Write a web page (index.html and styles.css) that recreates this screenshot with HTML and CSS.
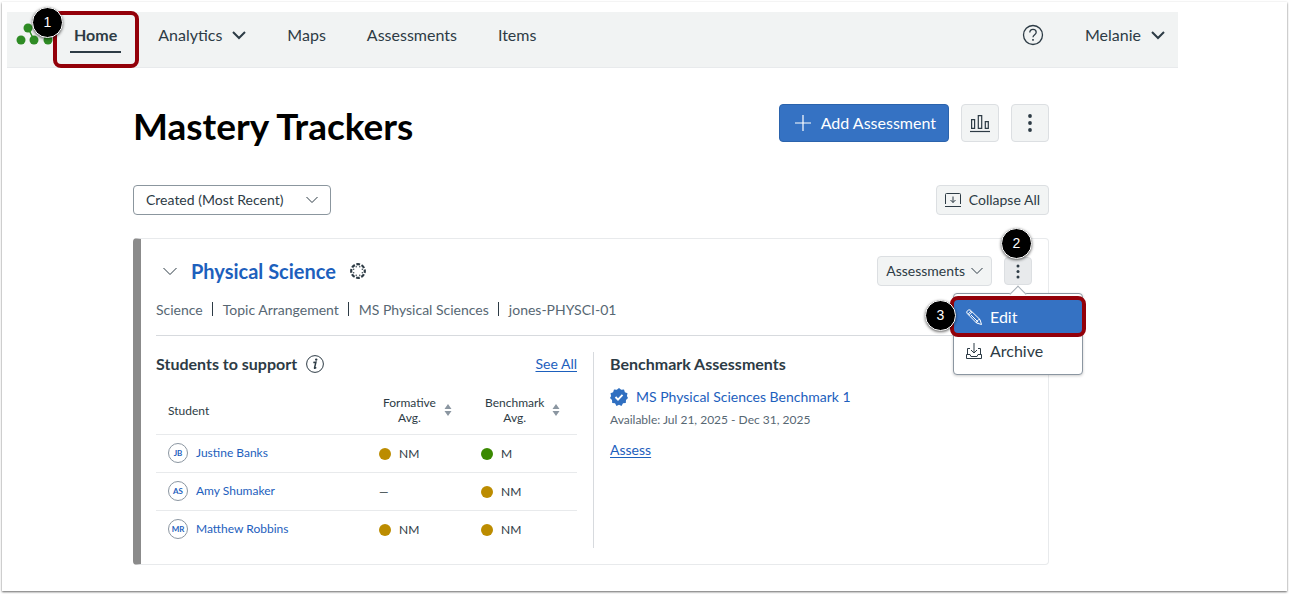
FILE: index.html
```html
<!DOCTYPE html>
<html lang="en">
<head>
<meta charset="utf-8">
<title>Mastery Trackers</title>
<meta name="viewport" content="width=device-width, initial-scale=1">
<link rel="stylesheet" href="styles.css">
</head>
<body>
<div class="frame">
  <div class="app">
    <header class="topbar">
      <a class="logo" href="#" aria-label="Dashboard">
        <svg width="42" height="24" viewBox="0 0 42 24" fill="#2e8b24"><path d="M12 5l6 12M25 5l7 12" stroke="#2e8b24" stroke-width="1.5"/><circle cx="12" cy="5" r="4.5"/><circle cx="25" cy="5" r="4.5"/><circle cx="5" cy="17" r="4.5"/><circle cx="18" cy="17" r="4.5"/><circle cx="32" cy="17" r="4.5"/></svg>
      </a>
      <nav class="nav">
        <a class="nav-link nav-current" href="#">Home<span class="mark mark-home"></span><span class="step step-home">1</span></a>
        <a class="nav-link" href="#">Analytics <svg width="14" height="9" viewBox="0 0 14 9" fill="none" stroke="#2d3b45" stroke-width="2"><path d="M1 1l6 6 6-6"/></svg></a>
        <a class="nav-link" href="#">Maps</a>
        <a class="nav-link" href="#">Assessments</a>
        <a class="nav-link" href="#">Items</a>
      </nav>
      <button class="help" type="button" aria-label="Help">
        <svg width="22" height="22" viewBox="0 0 22 22" fill="none" stroke="#2d3b45" stroke-width="1.3"><circle cx="11" cy="11" r="9.5"/><path d="M7.8 8.6c0-2 1.4-3.2 3.2-3.2s3.2 1.200 3.200 2.900c0 2.300-3.200 2.500-3.200 5"/><path d="M11 15v1.700" stroke-width="1.600"/></svg>
      </button>
      <a class="nav-link" href="#">Melanie <svg width="14" height="9" viewBox="0 0 14 9" fill="none" stroke="#2d3b45" stroke-width="2"><path d="M1 1l6 6 6-6"/></svg></a>
    </header>

    <main class="content">
      <div class="title-row">
        <h1 class="title">Mastery Trackers</h1>
        <div class="actions">
          <button class="btn btn-primary" type="button"><svg width="16" height="16" viewBox="0 0 16 16" stroke="#fff" stroke-width="1.200"><path d="M8 0v16M0 8h16"/></svg>Add Assessment</button>
          <button class="btn btn-icon" type="button" aria-label="Reports"><svg width="20" height="20" viewBox="0 0 20 20" fill="none" stroke="#2d3b45" stroke-width="1.200"><path d="M1.600 6.600h3v8.800h-3zM8.300 2.600h3.400v12.800H8.300zM15.300 8.600h3v6.800h-3z"/><path d="M0 18.500h20"/></svg></button>
          <button class="btn btn-icon" type="button" aria-label="More options"><svg width="4" height="18" viewBox="0 0 4 18" fill="#2d3b45"><circle cx="2" cy="2" r="1.900"/><circle cx="2" cy="9" r="1.900"/><circle cx="2" cy="16" r="1.900"/></svg></button>
        </div>
      </div>

      <div class="sort-row">
        <div class="sort">
          <select class="sort-select" aria-label="Sort trackers"><option>Created (Most Recent)</option></select>
          <svg class="sort-chevron" width="12" height="8" viewBox="0 0 12 8" fill="none" stroke="#2d3b45"><path d="M.5 1L6 6.500 11.500 1"/></svg>
        </div>
        <button class="btn btn-small" type="button"><svg width="16" height="16" viewBox="0 0 16 16" fill="none" stroke="#2d3b45"><path d="M.5 12V2.500q0-1 1-1h13q1 0 1 1V12M0 14.500h16M8 4.500v6M5.500 8L8 10.500 10.500 8"/></svg>Collapse All</button>
      </div>

      <section class="card">
        <div class="card-head">
          <button class="toggle" type="button" aria-label="Collapse tracker"><svg width="14" height="9" viewBox="0 0 14 9" fill="none" stroke="#2d3b45"><path d="M.5 1L7 7.500 13.500 1"/></svg></button>
          <h2 class="card-title"><a href="#">Physical Science</a></h2>
          <svg class="canvas-icon" width="16" height="16" viewBox="0 0 16 16"><circle cx="8" cy="8" r="6.800" fill="none" stroke="#2d3b45" stroke-width="2.200" stroke-dasharray="3.740 1.600" stroke-dashoffset="1.870"/><g fill="#2d3b45"><circle cx="9.800" cy="3.700" r=".7"/><circle cx="12.300" cy="6.200" r=".7"/><circle cx="12.300" cy="9.800" r=".7"/><circle cx="9.800" cy="12.300" r=".7"/><circle cx="6.200" cy="12.300" r=".7"/><circle cx="3.700" cy="9.800" r=".7"/><circle cx="3.700" cy="6.200" r=".7"/><circle cx="6.200" cy="3.700" r=".7"/></g></svg>
          <button class="btn btn-small card-assess" type="button">Assessments <svg width="12" height="8" viewBox="0 0 12 8" fill="none" stroke="#2d3b45"><path d="M.5 1L6 6.500 11.500 1"/></svg></button>
          <div class="more">
            <button class="btn more-btn" type="button" aria-label="Tracker options" aria-expanded="true"><svg width="4" height="15" viewBox="0 0 4 15" fill="#2d3b45"><circle cx="2" cy="2" r="1.500"/><circle cx="2" cy="7.500" r="1.500"/><circle cx="2" cy="13" r="1.500"/></svg></button>
            <span class="step step-more">2</span>
            <div class="menu">
              <button class="menu-item menu-active" type="button"><svg width="16" height="16" viewBox="0 0 16 16" fill="none" stroke="#fff"><path d="M1 4.200Q.2 3 1.500 1.700T4.200 1L14 10.500l1.500 5-5-1.500zM3 6.200L6.200 3M2 5.200L5.200 2M5 6l7.200 7.200M10.500 14c0-2 1.500-3.500 3.500-3.500"/></svg>Edit<span class="mark mark-edit"></span><span class="step step-edit">3</span></button>
              <button class="menu-item" type="button"><svg width="16" height="16" viewBox="0 0 16 16" fill="none" stroke="#2d3b45"><path d="M4 5.500H1.500V11M12 5.500h2.500V11M.5 11.500H4l1 2h6l1-2h3.500v4H.5zM8 0v9.500M5 7l3 3 3-3"/></svg>Archive</button>
            </div>
          </div>
        </div>

        <ul class="meta">
          <li>Science</li><li>Topic Arrangement</li><li>MS Physical Sciences</li><li>jones-PHYSCI-01</li>
        </ul>

        <div class="panels">
          <div class="students">
            <div class="panel-head">
              <h3 class="panel-title">Students to support</h3>
              <svg width="18" height="18" viewBox="0 0 18 18" fill="none" stroke="#2d3b45"><circle cx="9" cy="9" r="8.400"/><path d="M7.300 7.600l2.600-.4-1.400 5.800q0 .8 1.800-.5" stroke-width="1.500"/><circle cx="10.200" cy="4.600" r="1.200" fill="#2d3b45" stroke="none"/></svg>
              <a class="link see-all" href="#">See All</a>
            </div>
            <table class="table">
              <colgroup><col class="col-name"><col class="col-form"><col class="col-bench"></colgroup>
              <thead>
                <tr>
                  <th scope="col">Student</th>
                  <th scope="col"><button class="sorter" type="button"><span>Formative<br>Avg.</span><svg width="8" height="12" viewBox="0 0 8 12" fill="#8b96a1"><path d="M4 0l3.500 5h-7zM4 12L.5 7h7z"/></svg></button></th>
                  <th scope="col"><button class="sorter" type="button"><span>Benchmark<br>Avg.</span><svg width="8" height="12" viewBox="0 0 8 12" fill="#8b96a1"><path d="M4 0l3.500 5h-7zM4 12L.5 7h7z"/></svg></button></th>
                </tr>
              </thead>
              <tbody>
                <tr>
                  <td><a class="student" href="#"><span class="avatar">JB</span>Justine Banks</a></td>
                  <td><span class="score"><span class="dot near"></span>NM</span></td>
                  <td><span class="score"><span class="dot met"></span>M</span></td>
                </tr>
                <tr>
                  <td><a class="student" href="#"><span class="avatar">AS</span>Amy Shumaker</a></td>
                  <td><span class="score">—</span></td>
                  <td><span class="score"><span class="dot near"></span>NM</span></td>
                </tr>
                <tr>
                  <td><a class="student" href="#"><span class="avatar">MR</span>Matthew Robbins</a></td>
                  <td><span class="score"><span class="dot near"></span>NM</span></td>
                  <td><span class="score"><span class="dot near"></span>NM</span></td>
                </tr>
              </tbody>
            </table>
          </div>

          <div class="benchmarks">
            <h3 class="panel-title">Benchmark Assessments</h3>
            <a class="benchmark" href="#"><svg width="18" height="18" viewBox="0 0 18 18"><path fill="#2f6fc1" d="M9 0l2.200 1.800L14 1.500l.9 2.700 2.600 1.100-.6 2.800L18 10l-2 2-.2 2.900-2.800.4L11.500 18 9 16.700 6.500 18 5 15.300l-2.800-.4L2 12l-2-2 1.100-1.900-.6-2.800 2.600-1.100.9-2.700 2.800.3z"/><path d="M5.500 9l2.500 2.600 4.500-4.800" fill="none" stroke="#fff" stroke-width="1.900"/></svg>MS Physical Sciences Benchmark 1</a>
            <p class="dates">Available: Jul 21, 2025 - Dec 31, 2025</p>
            <a class="link" href="#">Assess</a>
          </div>
        </div>
      </section>
    </main>
  </div>
</div>
</body>
</html>
```
FILE: styles.css
```css
* { box-sizing: border-box; }

body {
  margin: 0;
  padding: 2px 2px 3px;
  background: #fff;
  color: #2d3b45;
  font-family: Lato, "Liberation Sans", sans-serif;
  font-size: 14px;
  line-height: 20px;
}

h1, h2, h3, p, ul { margin: 0; padding: 0; }
a { color: inherit; text-decoration: none; }
button { margin: 0; font: inherit; color: inherit; cursor: pointer; }
svg { display: block; flex: none; }

.frame {
  min-height: calc(100vh - 5px);
  padding: 10px 109px 24px 5px;
  box-shadow: 0 1px 2px rgba(0, 0, 0, 0.6);
}

/* Top bar */
.topbar {
  display: flex;
  align-items: center;
  padding: 8px 13px 17px 9px;
  border-bottom: 1px solid #e8eaec;
  background: #f1f3f3;
  font-size: 16px;
}
.logo { margin-right: 16px; }
.nav { display: flex; flex: 1; gap: 41px; }
.nav-link {
  position: relative;
  display: flex;
  align-items: center;
  gap: 10px;
  line-height: 30px;
}
.nav-current { font-weight: 700; }
.nav-current::after {
  content: "";
  position: absolute;
  left: -4px;
  right: -4px;
  bottom: -3px;
  height: 2px;
  background: #2d3b45;
}
.help { margin-right: 41px; padding: 0; border: 0; background: none; }

/* Walkthrough marks */
.mark {
  position: absolute;
  border: 4px solid #930009;
  border-radius: 8px;
  pointer-events: none;
}
.mark-home { inset: -9px -22px -18px -21px; }
.mark-edit { inset: -4px; }
.step {
  position: absolute;
  z-index: 3;
  width: 31px;
  height: 31px;
  border: 1px solid #fff;
  border-radius: 50%;
  background: #000;
  box-shadow: 0 1px 3px rgba(0, 0, 0, 0.6);
  color: #fff;
  font: 400 14px/29px "Liberation Sans", sans-serif;
  text-align: center;
}
.step-home { left: -42px; top: -13px; }
.step-more { left: -3px; top: -29px; }
.step-edit { left: -29px; top: 0; }

/* Page content */
.content { padding: 36px 129px 0 126px; }
.title-row, .sort-row {
  display: flex;
  align-items: center;
  justify-content: space-between;
}
.title-row { margin-bottom: 43px; }
.sort-row { margin-bottom: 23px; }
.title {
  padding-top: 6px;
  color: #000;
  font-size: 37px;
  line-height: 30px;
}
.actions { display: flex; gap: 12px; }

.btn {
  display: flex;
  align-items: center;
  justify-content: center;
  border: 1px solid #dcdfe2;
  border-radius: 4px;
  background: #f2f4f4;
}
.btn-primary {
  gap: 10px;
  height: 38px;
  padding: 0 12px 0 15px;
  border-color: #2b63ac;
  background: #3572c3;
  color: #fff;
  font-size: 16px;
}
.btn-icon { width: 38px; height: 38px; padding: 0; }
.btn-small { gap: 8px; height: 30px; padding: 0 8px; }

.sort { position: relative; width: 198px; }
.sort-select {
  appearance: none;
  width: 100%;
  height: 30px;
  padding: 0 30px 0 12px;
  border: 1px solid #8b969e;
  border-radius: 4px;
  background: #fff;
  color: #2d3b45;
  font: inherit;
}
.sort-chevron {
  position: absolute;
  right: 13px;
  top: 11px;
  pointer-events: none;
}

/* Tracker card */
.card {
  padding: 17px 16px 16px 15px;
  border: 1px solid #e8eaec;
  border-left: 8px solid #8b8b8b;
  border-radius: 4px;
}
.card-head { display: flex; align-items: center; }
.toggle { margin: 0 14px 0 7px; padding: 0; border: 0; background: none; }
.card-title {
  color: #1d60bd;
  font-size: 20px;
  line-height: 28px;
}
.canvas-icon { margin-left: 14px; }
.card-assess { margin: 0 12px 0 auto; gap: 6px; }
.more { position: relative; }
.more-btn { width: 28px; height: 28px; padding: 0; background: #e8eaec; }

.menu {
  position: absolute;
  z-index: 2;
  top: 36px;
  right: -51px;
  width: 130px;
  padding: 6px 0 5px;
  border: 1px solid #8b96a1;
  border-radius: 4px;
  background: #fff;
  box-shadow: 0 1px 3px rgba(0, 0, 0, 0.2);
}
.menu::before {
  content: "";
  position: absolute;
  top: -6px;
  left: 58px;
  width: 11px;
  height: 11px;
  border: 1px solid #a5adb5;
  border-width: 1px 0 0 1px;
  background: #fff;
  transform: rotate(45deg);
}
.menu-item {
  position: relative;
  display: flex;
  align-items: center;
  gap: 8px;
  width: 100%;
  height: 36px;
  padding: 0 12px;
  border: 0;
  background: #fff;
  font-size: 16px;
}
.menu-active { z-index: 1; height: 33px; background: #3572c3; color: #fff; }

.meta {
  display: flex;
  flex-wrap: wrap;
  padding: 14px 0 15px;
  border-bottom: 1px solid #d7dade;
  color: #576773;
  list-style: none;
}
.meta li { display: flex; align-items: center; }
.meta li + li::before {
  content: "";
  width: 1px;
  height: 14px;
  margin: 0 10px 2px 9px;
  background: #2d3b45;
}

.panels {
  display: grid;
  grid-template-columns: 1fr 1fr;
  padding-top: 16px;
}
.students { padding-right: 16px; border-right: 1px solid #d7dade; }
.benchmarks { padding-left: 16px; }
.panel-head { display: flex; align-items: center; }
.panel-head svg { margin-left: 9px; }
.panel-title { font-size: 16px; line-height: 24px; }
.link { color: #1d60bd; text-decoration: underline; text-underline-offset: 2px; }
.see-all { margin-left: auto; }

.table {
  width: 100%;
  table-layout: fixed;
  border-collapse: collapse;
  font-size: 12px;
}
.col-form { width: 102px; }
.col-bench { width: 96px; }
.table th {
  height: 58px;
  padding: 13px 0 0;
  font-weight: 400;
  text-align: left;
}
.table th:first-child, .table td:first-child { padding-left: 12px; }
.table td { height: 38px; padding: 0; border-top: 1px solid #e8eaec; }
.sorter {
  display: flex;
  align-items: center;
  gap: 8px;
  padding: 0 0 3px 4px;
  border: 0;
  background: none;
  line-height: 15px;
  text-align: center;
}
.student { display: flex; align-items: center; gap: 8px; color: #1d60bd; }
.avatar {
  width: 20px;
  height: 20px;
  border: 1px solid #8b96a1;
  border-radius: 50%;
  font-size: 8px;
  font-weight: 700;
  line-height: 18px;
  text-align: center;
}
.score { display: flex; align-items: center; gap: 8px; padding-top: 2px; }
.dot { width: 12px; height: 12px; border-radius: 50%; }
.near { background: #bc8c00; }
.met { background: #3a8900; }

.benchmark {
  display: flex;
  align-items: center;
  gap: 8px;
  padding-top: 11px;
  color: #1d60bd;
}
.dates {
  padding: 3px 0 10px;
  color: #576773;
  font-size: 12px;
}
```
